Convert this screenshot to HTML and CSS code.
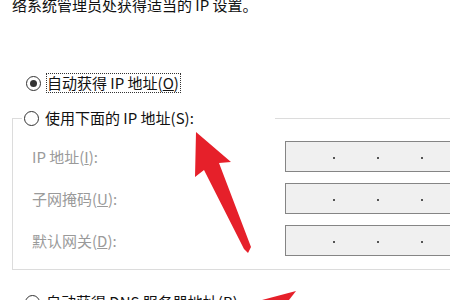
FILE: index.html
```html
<!DOCTYPE html>
<html lang="zh-CN">
<head>
  <meta charset="UTF-8">
  <title>IP 设置</title>
  <link rel="stylesheet" href="styles.css">
</head>
<body>
  <p class="intro">络系统管理员处获得适当的 IP 设置。</p>

  <!-- Automatic IP -->
  <div class="option">
    <span class="radio checked"></span>
    <span class="caption focus">自动获得 IP 地址(<u>O</u>)</span>
  </div>

  <!-- Manual IP group -->
  <fieldset class="group">
    <legend class="option legend">
      <span class="radio"></span>
      <span class="caption">使用下面的 IP 地址(S):</span>
    </legend>

    <div class="field">
      <span class="label">IP 地址(<u>I</u>):</span>
      <span class="ipbox"><i></i><i></i><i></i></span>
    </div>
    <div class="field">
      <span class="label">子网掩码(<u>U</u>):</span>
      <span class="ipbox"><i></i><i></i><i></i></span>
    </div>
    <div class="field">
      <span class="label">默认网关(<u>D</u>):</span>
      <span class="ipbox"><i></i><i></i><i></i></span>
    </div>
  </fieldset>

  <!-- Automatic DNS -->
  <div class="option dns">
    <span class="radio"></span>
    <span class="caption">自动获得 DNS 服务器地址(<u>B</u>)</span>
  </div>

  <!-- red annotation arrows -->
  <svg class="arrows" width="450" height="300" viewBox="0 0 450 300">
    <polygon points="196,132 231,162 219,163 251,247 248,253 244,249 204,170 195,177" fill="#e6202a"/>
    <polygon points="262,300 296,291 289,300" fill="#e6202a"/>
  </svg>
</body>
</html>
```

FILE: styles.css
```css
html, body {
  margin: 0;
  width: 450px;
  height: 300px;
  overflow: hidden;
  background: white;
}

body {
  position: relative;
  font-family: "Noto Sans CJK SC", "Noto Sans", sans-serif;
  font-size: 15px;
  color: #111;
}

.intro {
  margin: -5px 0 0 12px;
  line-height: 20px;
  white-space: nowrap;
}

.option {
  display: flex;
  align-items: center;
  height: 20px;
  margin: 58px 0 0 26px;
  white-space: nowrap;
}

.radio {
  box-sizing: border-box;
  width: 15px;
  height: 15px;
  border: 1px solid #333;
  border-radius: 50%;
  background: white;
  display: flex;
  align-items: center;
  justify-content: center;
  margin-right: 5px;
}

.radio.checked::after {
  content: "";
  width: 7px;
  height: 7px;
  border-radius: 50%;
  background: #333;
}

.caption {
  line-height: 18px;
  border: 1px solid transparent;
  padding: 0 1px 0 0;
}

.focus {
  border: 1px dotted #333;
}

.group {
  margin: 15px 0 0 12px;
  width: 500px;
  padding: 13px 0 13px 19px;
  border: 1px solid #dcdcdc;
  border-right: none;
}

.legend {
  margin: 0 0 0 -10px;
  padding: 0 0 0 2px;
  width: 251px;
  height: 20px;
}

.field {
  display: flex;
  align-items: center;
  height: 31px;
  margin-bottom: 11px;
}

.field:last-child {
  margin-bottom: 0;
}

.label {
  width: 253px;
  color: #9a9a9a;
  white-space: nowrap;
}

.ipbox {
  box-sizing: border-box;
  width: 220px;
  height: 31px;
  border: 1px solid #858585;
  background: #f0f0f0;
  display: flex;
  align-items: center;
  gap: 42px;
  padding-left: 47px;
}

.ipbox i {
  width: 2px;
  height: 2px;
  background: #555;
  margin-top: 3px;
}

.dns {
  margin: 22px 0 0 25px;
}

.arrows {
  position: absolute;
  left: 0;
  top: 0;
  pointer-events: none;
}
```
